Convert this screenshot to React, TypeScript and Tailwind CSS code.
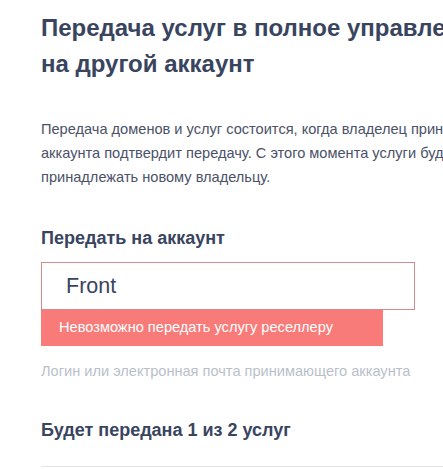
export default function App() {
  return (
    <main
      className="w-[443px] h-[469px] overflow-hidden bg-white pl-[41px] pt-[10px]"
      style={{ fontFamily: '"Liberation Sans", Arial, sans-serif' }}
    >
      <div className="w-[500px]">
        {/* Title */}
        <h1 className="w-[470px] text-[24px] leading-[36px] font-bold text-[#39445f]">
          Передача услуг в полное управление на другой аккаунт
        </h1>

        <p className="mt-[35px] text-[14.6px] leading-[24px] text-[#4b5167]">
          Передача доменов и услуг состоится, когда владелец принимающего
          аккаунта подтвердит передачу. С этого момента услуги будут
          принадлежать новому владельцу.
        </p>

        {/* Account field */}
        <h2 className="mt-[37px] text-[18px] leading-[24px] font-bold text-[#39445f]">
          Передать на аккаунт
        </h2>

        <div className="mt-[12px] w-[374px]">
          <div className="h-[48px] border border-[#d68b8b] flex items-center pl-[24px] text-[21.5px] text-[#39445f]">
            Front
          </div>
          <div className="h-[36px] w-[342px] bg-[#f87b79] flex items-center pl-[18px] text-[14.6px] text-white">
            Невозможно передать услугу реселлеру
          </div>
        </div>

        <p className="mt-[15px] text-[14.6px] leading-[20px] text-[#b9bfca]">
          Логин или электронная почта принимающего аккаунта
        </p>

        {/* Services */}
        <h2 className="mt-[37px] text-[18px] leading-[24px] font-bold text-[#39445f]">
          Будет передана 1 из 2 услуг
        </h2>

        <div className="mt-[24px] border-t border-[#e3e5ea]" />
      </div>
    </main>
  );
}
